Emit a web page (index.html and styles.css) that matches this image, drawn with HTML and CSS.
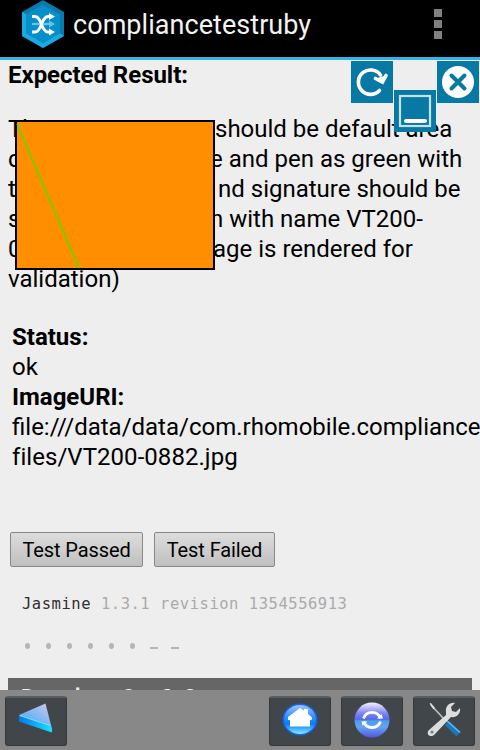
FILE: index.html
```html
<!DOCTYPE html>
<html lang="en">
<head>
<meta charset="utf-8">
<title>compliancetestruby</title>
<link rel="stylesheet" href="styles.css">
</head>
<body>
<div class="screen">
  <header class="bar">
    <svg class="logo" width="42" height="48" viewBox="0 0 42 48">
      <path d="M21 0 42 12V36L21 48 0 36V12Z" fill="#087aad"/>
      <path d="M0 12 4 14V33L21 43 38 33 42 36 21 48 0 36Z" fill="#1ba9e3"/>
      <path d="M21 5 38 14.5V33L21 43 4 33V14.5Z" fill="#078fca"/>
      <path d="M10 24H28" stroke="#67c4e8" stroke-width="2.2"/>
      <path d="M27 20.5 33 24 27 27.5Z" fill="#67c4e8"/>
      <path d="M10 16.5H13C20 16.5 19 32 26 32H29M10 32H13C20 32 19 16.5 26 16.5H29" fill="none" stroke="#fff" stroke-width="2.8"/>
      <path d="M27 13 33 16.5 27 20ZM27 28.5 33 32 27 35.5Z" fill="#fff"/>
    </svg>
    <h1 class="title">compliancetestruby</h1>
    <div class="overflow"><i></i><i></i><i></i></div>
  </header>
  <main class="content">
    <h2 class="heading">Expected Result:</h2>
    <div class="expected">
      <div><span class="lead">The signature area</span>should be default area</div>
      <div><span class="lead l2">color as orang</span>e and pen as green with</div>
      <div><span class="lead l3">the given area a</span>nd signature should be</div>
      <div><span class="lead l4">saved in locatio</span>n with name VT200-</div>
      <div><span class="lead l5">0882 (the im</span>age is rendered for</div>
      <div class="last">validation)</div>
    </div>
    <div class="result">
      <b class="status">Status:</b>
      <span>ok</span>
      <b class="uri">ImageURI:</b>
      <span class="path">file:///data/data/com.rhomobile.compliance</span>
      <span class="file">files/VT200-0882.jpg</span>
    </div>
    <div class="buttons">
      <button class="passed"><span>Test Passed</span></button>
      <button class="failed"><span>Test Failed</span></button>
    </div>
    <div class="jasmine"><span>Jasmine</span> 1.3.1 revision 1354556913</div>
    <div class="dots"><i></i><i></i><i></i><i></i><i></i><i></i><i class="dash"></i><i class="dash"></i></div>
    <div class="running">Running 6 of 8</div>
  </main>
  <svg class="signature" width="200" height="150" viewBox="0 0 200 150">
    <rect x="1" y="1" width="198" height="148" fill="#ff8e00" stroke="#000" stroke-width="2"/>
    <path d="M2 4 64 148" stroke="#3fe800" stroke-width="1.4"/>
  </svg>
  <svg class="tool redo" width="42" height="42" viewBox="0 0 42 42">
    <rect width="42" height="42" fill="#0878a5"/>
    <path d="M28.5 29.5A12.200 12.200 0 1 1 29.500 14" fill="none" stroke="#fff" stroke-width="3.6" stroke-linecap="round"/>
    <path d="M24.5 17.5 31.5 21 35 14.5" fill="#fff" stroke="#fff" stroke-width="3.6" stroke-linecap="round"/>
  </svg>
  <svg class="tool mini" width="42" height="42" viewBox="0 0 42 42">
    <rect width="42" height="42" fill="#0878a5"/>
    <rect x="6" y="6" width="30" height="30" fill="none" stroke="#c6e2ed" stroke-width="2.2"/>
    <path d="M12 31H31" stroke="#fff" stroke-width="4" stroke-linecap="round"/>
  </svg>
  <svg class="tool close" width="42" height="42" viewBox="0 0 42 42">
    <rect width="42" height="42" fill="#0878a5"/>
    <circle cx="21" cy="21" r="16" fill="#fff"/>
    <path d="M14.5 14.5 27.5 27.5M27.5 14.5 14.5 27.5" stroke="#0878a5" stroke-width="4" stroke-linecap="round"/>
  </svg>
  <footer class="toolbar">
    <div class="key back">
      <svg width="60" height="48" viewBox="0 0 60 48">
        <defs>
          <linearGradient id="tri" x1="0" y1="1" x2=".7" y2="0"><stop offset="0" stop-color="#078cf5"/><stop offset=".45" stop-color="#65b2f5"/><stop offset="1" stop-color="#bdc3ee"/></linearGradient>
          <linearGradient id="edge" x1="0" x2="1"><stop offset="0" stop-color="#0876ee"/><stop offset="1" stop-color="#16e4ff"/></linearGradient>
        </defs>
        <path d="M13 17 39.500 5.500 46 31V34L13 23Z" fill="url(#tri)"/>
        <path d="M13 17.500 45 28 46 34.500 13 23.500Z" fill="url(#edge)"/>
        <path d="M14 17.500 44 27.500" stroke="#79dcff" stroke-width="1.2"/>
      </svg>
    </div>
    <div class="key">
      <svg width="60" height="48" viewBox="0 0 60 48">
        <defs><linearGradient id="home" x1="0" y1="0" x2="0" y2="1"><stop offset="0" stop-color="#a2caff"/><stop offset=".4" stop-color="#388fff"/><stop offset=".65" stop-color="#087cf7"/><stop offset="1" stop-color="#8ff7ff"/></linearGradient></defs>
        <ellipse cx="30" cy="21.500" rx="16.700" ry="15.300" fill="url(#home)" stroke="#1264eb" stroke-width="1.500"/>
        <path d="M30 10 34 12.500V11H38V16L42 19.500 41.500 22H40V28.500H20V22H18V19Z" fill="#fff"/>
      </svg>
    </div>
    <div class="key">
      <svg width="60" height="48" viewBox="0 0 60 48">
        <defs><linearGradient id="sync" x1="0" y1="0" x2="0" y2="1"><stop offset="0" stop-color="#f2f2ff"/><stop offset=".3" stop-color="#8286f6"/><stop offset=".48" stop-color="#5568ed"/><stop offset=".52" stop-color="#4b9cec"/><stop offset=".7" stop-color="#63a5f2"/><stop offset="1" stop-color="#5356dd"/></linearGradient></defs>
        <circle cx="30" cy="22" r="17.500" fill="url(#sync)"/>
        <path d="M21.500 20.500A9 9 0 0 1 38.500 20.500M38.500 23.500A9 9 0 0 1 21.500 23.500" fill="none" stroke="#fff" stroke-width="2.700"/>
        <path d="M35 20.500H41L39.500 16ZM19.500 23.500H25.500L20.500 27.500Z" fill="#fff"/>
      </svg>
    </div>
    <div class="key">
      <svg width="60" height="48" viewBox="0 0 60 48">
        <path d="M17 7 30 21" stroke="#bbb" stroke-width="1.800"/>
        <path d="M15.500 5.500 17 5 21 10 19.500 11.500Z" fill="#ddd"/>
        <path d="M33 25 44.500 36" stroke="#1978bd" stroke-width="6"/>
        <path d="M33 23 46 34.500" stroke="#64b5ea" stroke-width="1.600"/>
        <path d="M32 14C31 8 36 4 41 5L37 9 38 13 42 14 46 10C47 16 42 20 37 19L21 36C17 41 11 36 15 32L32 17Z" fill="#ddd"/>
        <circle cx="18" cy="34" r="1.500" fill="#777"/>
      </svg>
    </div>
  </footer>
</div>
</body>
</html>
```

FILE: styles.css
```css
* { box-sizing: border-box; }
body { margin: 0; background: #eee; font-family: Roboto, sans-serif; color: #000; }
.screen { position: relative; width: 480px; height: 750px; overflow: hidden; display: flex; flex-direction: column; background: #eee; }
.bar { height: 60px; flex: none; background: #000; border-bottom: 3px solid #33b5e5; display: flex; align-items: flex-start; padding-left: 22px; }
.logo { flex: none; }
.title { margin: 9px 0 0 9px; font-size: 27px; line-height: 32px; font-weight: 400; letter-spacing: .05px; color: #f3f3f3; width: 361px; }
.overflow { display: flex; flex-direction: column; gap: 3px; padding-top: 9px; }
.overflow i { width: 8px; height: 8px; background: #808080; }
.content { flex: 1; min-height: 0; overflow: hidden; font-size: 24px; line-height: 30px; white-space: nowrap; }
.heading { margin: 0 0 24px 8px; font-size: 24px; line-height: 30px; font-weight: 700; letter-spacing: -.04px; }
.expected { padding-left: 8px; }
.lead { display: inline-block; width: 207px; height: 30px; overflow: hidden; vertical-align: top; }
.l2 { width: 202px; }
.l3 { width: 210px; }
.l4 { width: 202px; }
.l5 { width: 205px; }
.result { display: flex; flex-direction: column; margin: 28px 0 0 12px; }
.file { letter-spacing: .05px; }
.buttons { display: flex; gap: 11px; margin: 60px 0 0 10px; }
button { height: 35px; padding: 2px 0 0; border: 1px solid #888; border-radius: 2px; background: linear-gradient(#ddd, #bfbfbf); color: #000; font: 20px/31px Roboto, sans-serif; letter-spacing: -.1px; }
.passed { width: 133px; }
.failed { width: 121px; }
.jasmine { margin: 25px 0 0 22px; font: 15.5px/24px "DejaVu Sans Mono", monospace; letter-spacing: .53px; color: #aaa; }
.jasmine span { color: #303030; }
.dots { display: flex; align-items: center; gap: 16px; margin: 23px 0 0 25px; height: 14px; }
.dots i { width: 5px; height: 6px; border-radius: 50%; background: #b5b5b5; }
.dots .dash { width: 8px; height: 2px; border-radius: 0; margin: 3px -1px 0; }
.dots .dash + .dash { margin-left: -2px; }
.running { margin: 25px 8px 0; height: 42px; background: #666; color: #eee; font: 700 20.8px/40px "DejaVu Sans Mono", monospace; padding-left: 13px; }
.signature { position: absolute; left: 15px; top: 120px; }
.tool { position: absolute; }
.redo { left: 351px; top: 61px; }
.mini { left: 394px; top: 90px; }
.close { left: 437px; top: 61px; }
.toolbar { height: 60px; flex: none; background: #888; display: flex; align-items: flex-start; gap: 10px; padding: 6px 5px; }
.key { width: 62px; height: 50px; border: 1px solid #34383a; border-top: 2px solid #5a5e60; border-radius: 3px; background: #40464a; display: flex; }
.back { margin-right: auto; }
```
